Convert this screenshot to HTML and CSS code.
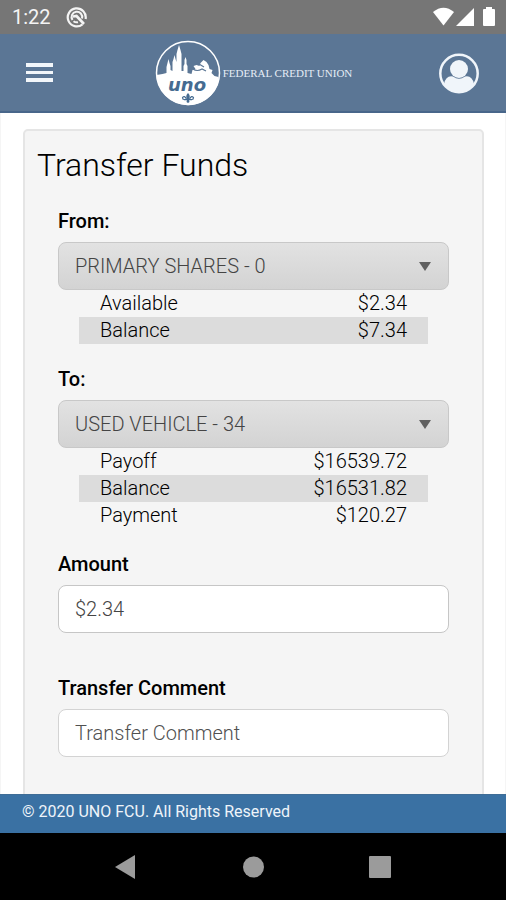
FILE: index.html
```html
<!DOCTYPE html>
<html lang="en">
<head>
<meta charset="utf-8">
<meta name="viewport" content="width=device-width, initial-scale=1">
<title>Transfer Funds</title>
<link rel="stylesheet" href="styles.css">
</head>
<body>
<div class="status-bar">
  <span class="clock">1:22</span>
  <svg class="status-badge" width="22" height="22" viewBox="0 0 22 22" fill="none" stroke="#f4f4f4" aria-hidden="true">
    <path d="M16.500 18.300A9 9 0 1 1 19.600 13" stroke-width="2.200"/>
    <path d="M6.500 14A5.300 5.300 0 1 1 16 12.500M7.500 15.200Q9.500 16.800 12 16.200" stroke-width="2"/>
    <path d="M7 10.500l3.500-.5 7.500 8" stroke-width="2.600"/>
  </svg>
  <svg class="status-icons" width="64" height="20" viewBox="0 0 64 20" fill="#fff" aria-hidden="true">
    <path d="M1 5Q11.500-3.500 22 5L11.500 18.500z"/>
    <path d="M42 1v18H24z"/>
    <path d="M54 2V0h6v2h2q1 0 1 1v15q0 1-1 1H52q-1 0-1-1V3q0-1 1-1z"/>
  </svg>
</div>

<header class="app-header">
  <button class="icon-button" type="button" aria-label="Menu">
    <svg width="28" height="20" viewBox="0 0 28 20" fill="#f2f6fa"><path d="M0 0h27v4H0zM0 8h27v3H0zM0 15h27v4H0z"/></svg>
  </button>
  <a class="brand" href="#">
    <svg class="brand-mark" width="66" height="66" viewBox="0 0 66 66" role="img" aria-label="UNO">
      <circle cx="33" cy="33" r="31.500" fill="#5b7695" stroke="#fff" stroke-width="1.500"/>
      <path fill="#fff" d="M1.500 35l6-1 4-1v-6l1-4 1-4 1 4 1 3v4l2 1v-9l1-3 1-4 1 4 1 3v-8l1-4 1.500-5 1.500 5 1 4v17h2v-5l1-2v-4l1-3 1 3v4l1 2v7l4 1 1-4 3-1-2-3 3-1 3 1 1-3 3-3 3 2 2 3 1 4 3 1-1 3 3 3 4 1 .5 3A31.600 31.600 0 0 1 1.500 35z"/>
      <path fill="none" stroke="#5b7695" stroke-width="1.200" d="M38 29q4 3 9 0l4 2M44 24l5 3"/>
      <text class="mark-text" x="13" y="51">uno</text>
      <g fill="#456b91">
        <path d="M33 53q3 3 1 6h-2q-2-3 1-6z"/>
        <path d="M31.500 59q-2-4-4-1.500 0 2 1.500 2M34.500 59q2-4 4-1.500 0 2-1.500 2" fill="none" stroke="#456b91" stroke-width="1.200"/>
        <path d="M29 59h8v1.200h-8zM32.300 59h1.400l.8 3-1.500 1-1.500-1z"/>
      </g>
    </svg>
    <span class="brand-name">FEDERAL CREDIT UNION</span>
  </a>
  <button class="icon-button" type="button" aria-label="Profile">
    <svg width="40" height="41" viewBox="0 0 40 41">
      <circle cx="20" cy="20.500" r="18.700" fill="#5b7695" stroke="#f0f5fa" stroke-width="2.500"/>
      <circle cx="20" cy="16" r="9" fill="#f0f5fa"/>
      <path fill="#f0f5fa" d="M5 31Q7 22 14 23.500Q20 28 26 23.500Q33 22 35 31Q29 39 20 39Q11 39 5 31z"/>
    </svg>
  </button>
</header>

<main class="page">
  <form class="panel">
    <h1 class="title">Transfer Funds</h1>
    <div class="fields">
      <section class="account">
        <label class="label" for="from">From:</label>
        <div class="select-box">
          <select class="control select" id="from"><option>PRIMARY SHARES - 0</option></select>
          <span class="arrow"></span>
        </div>
        <table class="details">
          <tr><th scope="row">Available</th><td>$2.34</td></tr>
          <tr><th scope="row">Balance</th><td>$7.34</td></tr>
        </table>
      </section>
      <section class="account">
        <label class="label" for="to">To:</label>
        <div class="select-box">
          <select class="control select" id="to"><option>USED VEHICLE - 34</option></select>
          <span class="arrow"></span>
        </div>
        <table class="details">
          <tr><th scope="row">Payoff</th><td>$16539.72</td></tr>
          <tr><th scope="row">Balance</th><td>$16531.82</td></tr>
          <tr><th scope="row">Payment</th><td>$120.27</td></tr>
        </table>
      </section>
      <section class="entry">
        <label class="label" for="amount">Amount</label>
        <input class="control amount" id="amount" type="text" value="$2.34">
      </section>
      <section class="entry">
        <label class="label" for="comment">Transfer Comment</label>
        <input class="control" id="comment" type="text" placeholder="Transfer Comment">
      </section>
    </div>
  </form>
</main>

<footer class="footer">© 2020 UNO FCU. All Rights Reserved</footer>
<nav class="system-nav">
  <button class="icon-button" type="button" aria-label="Back"><svg width="22" height="24" viewBox="0 0 22 24"><path fill="#9b9b9b" d="M0 12L20 0v24z"/></svg></button>
  <button class="icon-button" type="button" aria-label="Home"><svg width="22" height="22" viewBox="0 0 22 22"><circle cx="11.500" cy="11" r="10.500" fill="#9b9b9b"/></svg></button>
  <button class="icon-button" type="button" aria-label="Recent apps"><svg width="22" height="22" viewBox="0 0 22 22"><rect width="22" height="22" rx="1" fill="#9b9b9b"/></svg></button>
</nav>
</body>
</html>
```
FILE: styles.css
```css
* { box-sizing: border-box; }

body {
  margin: 0;
  height: 100vh;
  display: flex;
  flex-direction: column;
  font-family: Roboto, "Liberation Sans", sans-serif;
  font-size: 20px;
  color: #000;
  background: #fff;
}

svg { display: block; }

.icon-button {
  padding: 0;
  border: 0;
  background: none;
}

.status-bar {
  flex: none;
  display: flex;
  align-items: center;
  gap: 15px;
  height: 34px;
  padding: 0 10px 0 12px;
  background: #767676;
  color: #f4f4f4;
}

.status-icons { margin-left: auto; }

.app-header {
  flex: none;
  display: flex;
  align-items: center;
  justify-content: space-between;
  height: 79px;
  padding: 1px 27px 0 26px;
  background: #5b7695;
  border-bottom: 2px solid #48668a;
}

.brand {
  display: flex;
  align-items: center;
  gap: 2px;
  margin-left: 14px;
  color: #e6edf5;
  text-decoration: none;
}

.mark-text {
  font: italic bold 18px "DejaVu Sans", sans-serif;
  fill: #456b91;
}

.brand-name {
  font-family: "Liberation Serif", serif;
  font-size: 11px;
}

.page {
  flex: 1;
  min-height: 0;
  overflow: hidden;
  padding: 16px 21px 0 22px;
  border: solid #f5f5f5;
  border-width: 0 1px;
}

.panel {
  min-height: 100%;
  padding: 14px 33px 36px;
  background: #f5f5f5;
  border: 2px solid #e5e5e5;
  border-radius: 5px;
}

.title {
  margin: 0 0 23px -21px;
  font-size: 32px;
  line-height: 40px;
  font-weight: 300;
}

.fields {
  display: flex;
  flex-direction: column;
  gap: 22px;
}

.label {
  display: block;
  margin-bottom: 8px;
  line-height: 26px;
  font-weight: 500;
}

.entry { margin-bottom: 20px; }

.control {
  display: block;
  width: 100%;
  height: 48px;
  padding: 0 16px;
  border: 1px solid #d3d3d3;
  border-radius: 8px;
  background: #fff;
  font: inherit;
  font-weight: 300;
  color: #444;
}

.control::placeholder { color: #505050; opacity: 1; }

.amount { border-color: #c6c6c6; }

.select-box { position: relative; }

.select {
  appearance: none;
  border-color: #c8c8c8;
  background: linear-gradient(#e2e2e2, #d3d3d3);
}

.arrow {
  position: absolute;
  right: 18px;
  top: 20px;
  border: solid transparent;
  border-width: 9px 6px 0;
  border-top-color: #606060;
  pointer-events: none;
}

.details {
  width: calc(100% - 42px);
  margin: 0 21px;
  border-collapse: collapse;
  line-height: 27px;
}

.details th,
.details td {
  padding: 0 21px;
  font-weight: 300;
  text-align: left;
}

.details td { text-align: right; }

.details tr:nth-child(2) { background: #dcdcdc; }

.footer {
  flex: none;
  height: 39px;
  padding: 6px 22px;
  background: #3a71a3;
  border-top: 1px solid #3f6d96;
  color: #eef4fa;
  font-size: 16px;
  line-height: 22px;
}

.system-nav {
  flex: none;
  display: flex;
  align-items: center;
  justify-content: space-between;
  height: 67px;
  padding: 0 115px;
  background: #000;
}
```
